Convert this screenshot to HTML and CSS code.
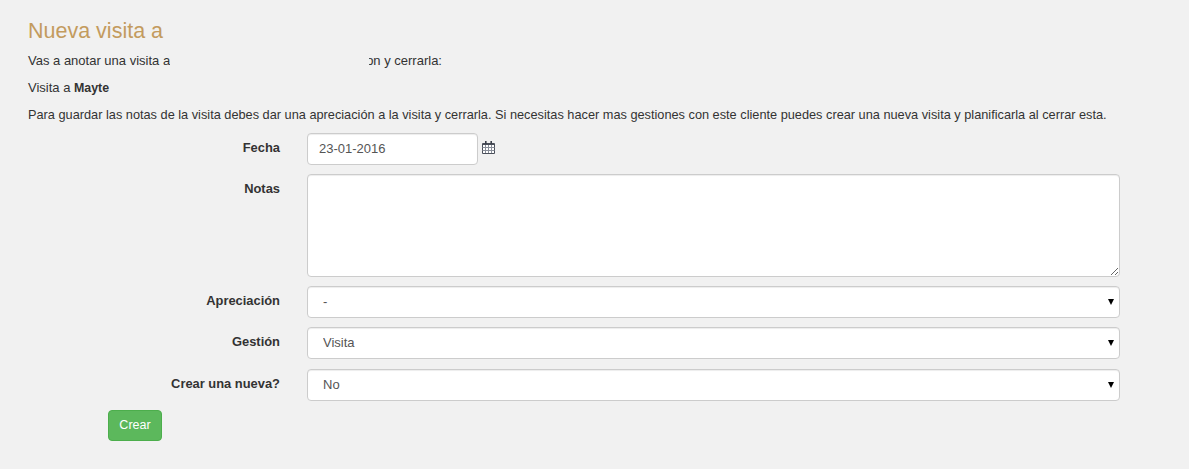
FILE: index.html
```html
<!DOCTYPE html>
<html lang="es">
<head>
<meta charset="utf-8">
<title>Nueva visita</title>
<link rel="stylesheet" href="styles.css">
</head>
<body>
<main class="page">
  <h1 class="title">Nueva visita a</h1>
  <p class="line">Vas a anotar una visita a<span class="blank"></span>on y cerrarla:</p>
  <p class="line">Visita a <strong class="name">Mayte</strong></p>
  <p class="line line-long">Para guardar las notas de la visita debes dar una apreciación a la visita y cerrarla. Si necesitas hacer mas gestiones con este cliente puedes crear una nueva visita y planificarla al cerrar esta.</p>
  <form class="form">
    <div class="row">
      <label class="label" for="fecha">Fecha</label>
      <div class="date-wrap">
        <input class="control date" id="fecha" type="text" value="23-01-2016">
        <svg class="cal" width="13" height="13" viewBox="0 0 13 13" aria-hidden="true">
          <path d="M.5 2.5h12v10H.5z" fill="#fff" stroke="#4a4f5a"/>
          <path d="M1 2h11v2H1z" fill="#4a4f5a"/>
          <path d="M3 0h1.6v3H3zM8.4 0H10v3H8.4z" fill="#3a3f4a"/>
          <path d="M.5 6.5h12M.5 9.5h12M3.5 4v8M6.5 4v8M9.5 4v8" stroke="#8a8f9a" stroke-width="1" fill="none"/>
        </svg>
      </div>
    </div>
    <div class="row">
      <label class="label" for="notas">Notas</label>
      <textarea class="control notes" id="notas"></textarea>
    </div>
    <div class="row">
      <label class="label" for="apre">Apreciación</label>
      <div class="select-wrap"><select class="control select" id="apre"><option>-</option></select></div>
    </div>
    <div class="row row-wide">
      <label class="label" for="gest">Gestión</label>
      <div class="select-wrap"><select class="control select" id="gest"><option>Visita</option></select></div>
    </div>
    <div class="row">
      <label class="label" for="nueva">Crear una nueva?</label>
      <div class="select-wrap"><select class="control select" id="nueva"><option>No</option></select></div>
    </div>
    <button class="btn" type="button">Crear</button>
  </form>
</main>
</body>
</html>
```
FILE: styles.css
```css
* { box-sizing: border-box; }
html, body { margin: 0; height: 100%; }
body {
  background: #f1f1f1;
  color: #333;
  font-family: "Liberation Sans", Arial, sans-serif;
  font-size: 13px;
  line-height: 20px;
}
.page { padding: 18px 69px 0 28px; }
.title {
  margin: 0 0 6px;
  font-size: 21.5px;
  line-height: 27px;
  font-weight: 400;
  color: #c39b5e;
}
.line { margin: 0 0 7px; white-space: nowrap; }
.line-long { font-size: 12.75px; }
.name { font-size: 12.4px; }
.blank {
  display: inline-block;
  position: relative;
  width: 199px;
  height: 14px;
  margin-right: -3px;
  vertical-align: middle;
  background: #f1f1f1;
}
.form { margin-top: 8px; }
.row {
  display: grid;
  grid-template-columns: 252px 1fr;
  column-gap: 27px;
  margin-bottom: 9px;
}
.row-wide { margin-bottom: 10px; }
.label { font-size: 12.9px; font-weight: 700; text-align: right; padding-top: 5px; }
.control {
  display: block;
  width: 100%;
  background: #fff;
  border: 1px solid #ccc;
  border-radius: 4px;
  color: #555;
  font: 13px/20px "Liberation Sans", Arial, sans-serif;
  box-shadow: inset 0 1px 1px rgba(0,0,0,.075);
}
.date-wrap { display: flex; align-items: flex-start; gap: 4px; }
.date { width: 171px; height: 32px; padding: 4px 11px 6px; }
.cal { margin-top: 8px; }
.notes { height: 103px; padding: 6px 12px; }
.select-wrap { position: relative; }
.select-wrap::after {
  content: "";
  position: absolute;
  right: 6px;
  top: 13px;
  border-left: 3.5px solid transparent;
  border-right: 3.5px solid transparent;
  border-top: 6px solid #000;
  pointer-events: none;
}
.select {
  height: 32px;
  padding: 5px 15px;
  appearance: none;
  -webkit-appearance: none;
}
.btn {
  display: block;
  margin-left: 80px;
  width: 54px;
  height: 31px;
  padding: 0 0 2px;
  background: #5cb85c;
  border: 1px solid #4cae4c;
  border-radius: 4px;
  color: #fff;
  font: 12.5px/20px "Liberation Sans", Arial, sans-serif;
}
```
